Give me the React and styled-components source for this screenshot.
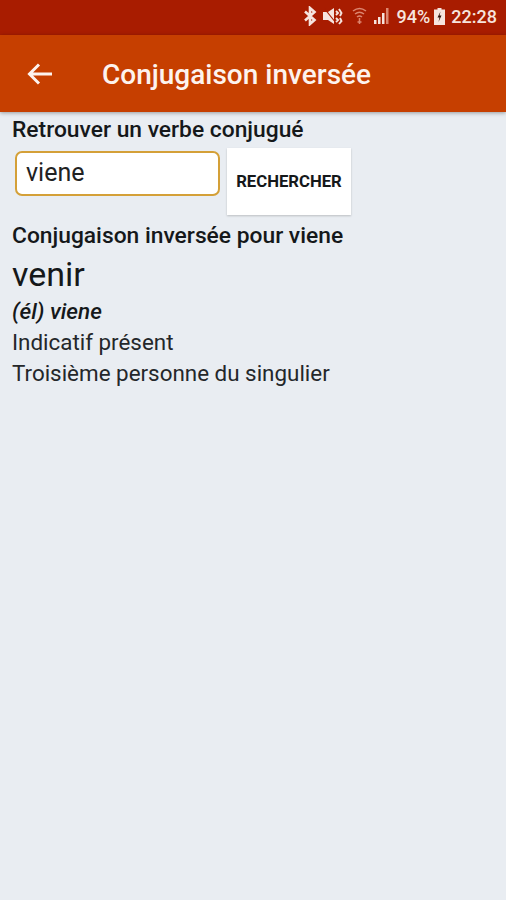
import React from "react";
import styled, { createGlobalStyle } from "styled-components";

const GlobalStyle = createGlobalStyle`
  html, body {
    margin: 0;
    padding: 0;
    background: #e9edf2;
    font-family: Roboto, "Liberation Sans", sans-serif;
  }
`;

const Page = styled.div`
  width: 506px;
  height: 900px;
  overflow: hidden;
  background: #e9edf2;
  color: #15181a;
`;

const StatusBar = styled.div`
  height: 35px;
  box-sizing: border-box;
  padding: 0 9px 3px 0;
  background: #a81c00;
  color: #f6e4de;
  display: flex;
  align-items: center;
  justify-content: flex-end;
  font-size: 18px;
  font-weight: 500;
`;

const StatusIcon = styled.svg`
  display: block;
  flex: none;
  margin-right: ${(props) => props.$gap || 6}px;
`;

const Battery = styled.span`
  margin-right: 4px;
`;

const AppBar = styled.header`
  height: 77px;
  background: #c63f00;
  box-shadow: 0 1px 4px rgba(0, 0, 0, 0.35);
  display: flex;
  align-items: center;
  color: #fdf3ee;
  position: relative;
`;

const BackButton = styled.div`
  width: 102px;
  padding-left: 27px;
  box-sizing: border-box;
  display: flex;
  align-items: center;
`;

const Title = styled.h1`
  margin: 0;
  padding-top: 2px;
  font-size: 28px;
  font-weight: 500;
  line-height: 32px;
`;

const Content = styled.main`
  padding: 5px 12px 0;
`;

const Label = styled.div`
  font-size: 22.8px;
  font-weight: 500;
  line-height: 26px;
  white-space: nowrap;
`;

const SearchRow = styled.div`
  display: flex;
  align-items: flex-start;
  gap: 7px;
  margin: 5px 0 8px 3px;
`;

const SearchInput = styled.div`
  width: 205px;
  height: 45px;
  margin-top: 3px;
  box-sizing: border-box;
  padding: 0 0 2px 9px;
  display: flex;
  align-items: center;
  background: #fff;
  border: 2px solid #d4a038;
  border-radius: 7px;
  font-size: 25px;
  color: #222;
`;

const SearchButton = styled.div`
  width: 124px;
  height: 67px;
  display: flex;
  align-items: center;
  justify-content: center;
  background: #fff;
  box-shadow: 0 1px 2px rgba(0, 0, 0, 0.2);
  font-size: 16.7px;
  font-weight: 700;
  color: #15181a;
`;

const Verb = styled.div`
  font-size: 34px;
  line-height: 42px;
  margin: 4px 0 1px;
`;

const Person = styled.div`
  font-size: 22.5px;
  line-height: 31px;
  font-weight: 500;
  font-style: italic;
`;

const Detail = styled.div`
  font-size: 22.4px;
  line-height: 31px;
  color: #24272a;
`;

const BluetoothIcon = () => (
  <StatusIcon $gap={6} width="14" height="20" viewBox="0 0 14 20" fill="none" stroke="#f6e4de" strokeWidth="2.6">
    <path d="M2 5.5 L11.5 14 L7 18 V2 L11.5 6 L2 14.5" />
  </StatusIcon>
);

const MuteIcon = () => (
  <StatusIcon $gap={9} width="20" height="20" viewBox="0 0 20 20" fill="#f6e4de">
    <path d="M0 6 H5 L11 2 V18 L5 14 H0 Z" />
    <path d="M1 2 L13 17" stroke="#a81c00" strokeWidth="1.2" />
    <path d="M13 5 L15 7 L13 9 M16 3 L18.5 7 L17 10 M13 12 L15 14 L13 16 M17 12 L18.5 15 L16 18" fill="none" stroke="#f6e4de" strokeWidth="1.9" />
  </StatusIcon>
);

const WifiIcon = () => (
  <StatusIcon $gap={7} width="15" height="20" viewBox="0 0 15 20" fill="none" stroke="#dc8670" strokeWidth="1.5">
    <path d="M1 5 Q7.5 0 14 5 M3 8 Q7.5 4.5 12 8 M5 11 Q7.5 9 10 11" />
    <path d="M7.5 12 V18 M5.5 16 H9.5" />
  </StatusIcon>
);

const SignalIcon = () => (
  <StatusIcon $gap={7} width="16" height="18" viewBox="0 0 16 18" fill="#f6e4de">
    <rect x="0" y="13" width="2.5" height="4" />
    <rect x="4" y="10" width="2.5" height="7" />
    <rect x="8" y="6" width="2.5" height="11" />
    <rect x="12" y="1" width="2.5" height="16" fill="#dc8670" />
  </StatusIcon>
);

const BatteryIcon = () => (
  <StatusIcon $gap={6} width="11" height="17" viewBox="0 0 11 17">
    <path d="M3.5 0 H7.5 V1.5 H11 V17 H0 V1.5 H3.5 Z" fill="#f6e4de" />
    <path d="M6.5 3.5 L3.5 9.5 H5.5 L4.5 14 L7.5 7.5 H5.5 Z" fill="#2a1008" />
  </StatusIcon>
);

const ArrowIcon = () => (
  <svg width="26" height="24" viewBox="0 0 26 24" fill="none" stroke="#fdf3ee" strokeWidth="3">
    <path d="M25 12 H3 M12 2.5 L2.5 12 L12 21.5" />
  </svg>
);

export default function App() {
  return (
    <Page>
      <GlobalStyle />
      <StatusBar>
        <BluetoothIcon />
        <MuteIcon />
        <WifiIcon />
        <SignalIcon />
        <Battery>94%</Battery>
        <BatteryIcon />
        <span>22:28</span>
      </StatusBar>
      <AppBar>
        <BackButton>
          <ArrowIcon />
        </BackButton>
        <Title>Conjugaison inversée</Title>
      </AppBar>
      <Content>
        <Label>Retrouver un verbe conjugué</Label>
        <SearchRow>
          <SearchInput>viene</SearchInput>
          <SearchButton>RECHERCHER</SearchButton>
        </SearchRow>
        <Label>Conjugaison inversée pour viene</Label>
        <Verb>venir</Verb>
        <Person>(él) viene</Person>
        <Detail>Indicatif présent</Detail>
        <Detail>Troisième personne du singulier</Detail>
      </Content>
    </Page>
  );
}
